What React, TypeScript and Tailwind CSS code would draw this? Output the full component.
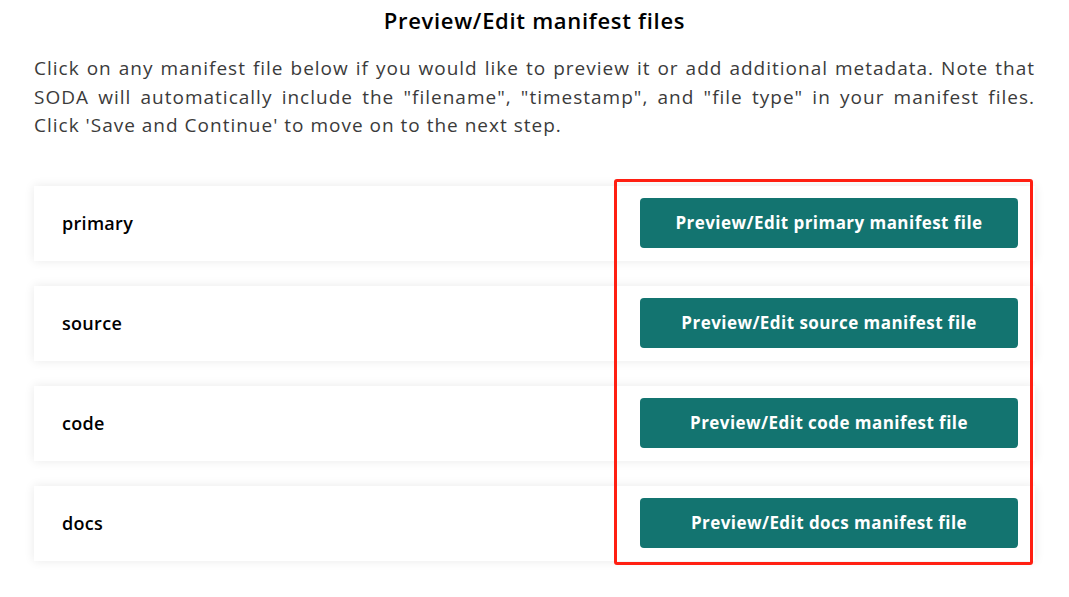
const FILES = ["primary", "source", "code", "docs"];

function App() {
  return (
    <div className="min-h-[597px] bg-white px-[34px] pt-[5px] font-['Open_Sans',sans-serif]">
      <h2 className="text-center text-[22px] leading-[30px] font-semibold tracking-[0.7px] text-black">
        Preview/Edit manifest files
      </h2>
      <p className="mt-[19px] text-justify text-[19px] leading-[28.5px] tracking-[1px] text-[#3b3b3b]">
        Click on any manifest file below if you would like to preview it or add additional metadata. Note that
        SODA will automatically include the "filename", "timestamp", and "file type" in your manifest files.
        Click 'Save and Continue' to move on to the next step.
      </p>
      <div className="relative mt-[46px] flex flex-col gap-[25px]">
        {FILES.map((name) => (
          <div
            key={name}
            className="flex h-[75px] items-center justify-between bg-white pl-[28px] pr-[17px] shadow-[0_0_10px_rgba(0,0,0,0.09)]"
          >
            <span className="text-[18px] font-semibold tracking-[0.3px] text-black">{name}</span>
            <button className="h-[50px] w-[378px] rounded-[4px] bg-[#137470] text-[17px] font-bold tracking-[0.45px] text-white">
              Preview/Edit {name} manifest file
            </button>
          </div>
        ))}
        <div className="pointer-events-none absolute -top-[7px] -bottom-[4px] left-[580px] right-[2px] rounded-[3px] border-[3px] border-[#ff1f12]" />
      </div>
    </div>
  );
}

export default App;
